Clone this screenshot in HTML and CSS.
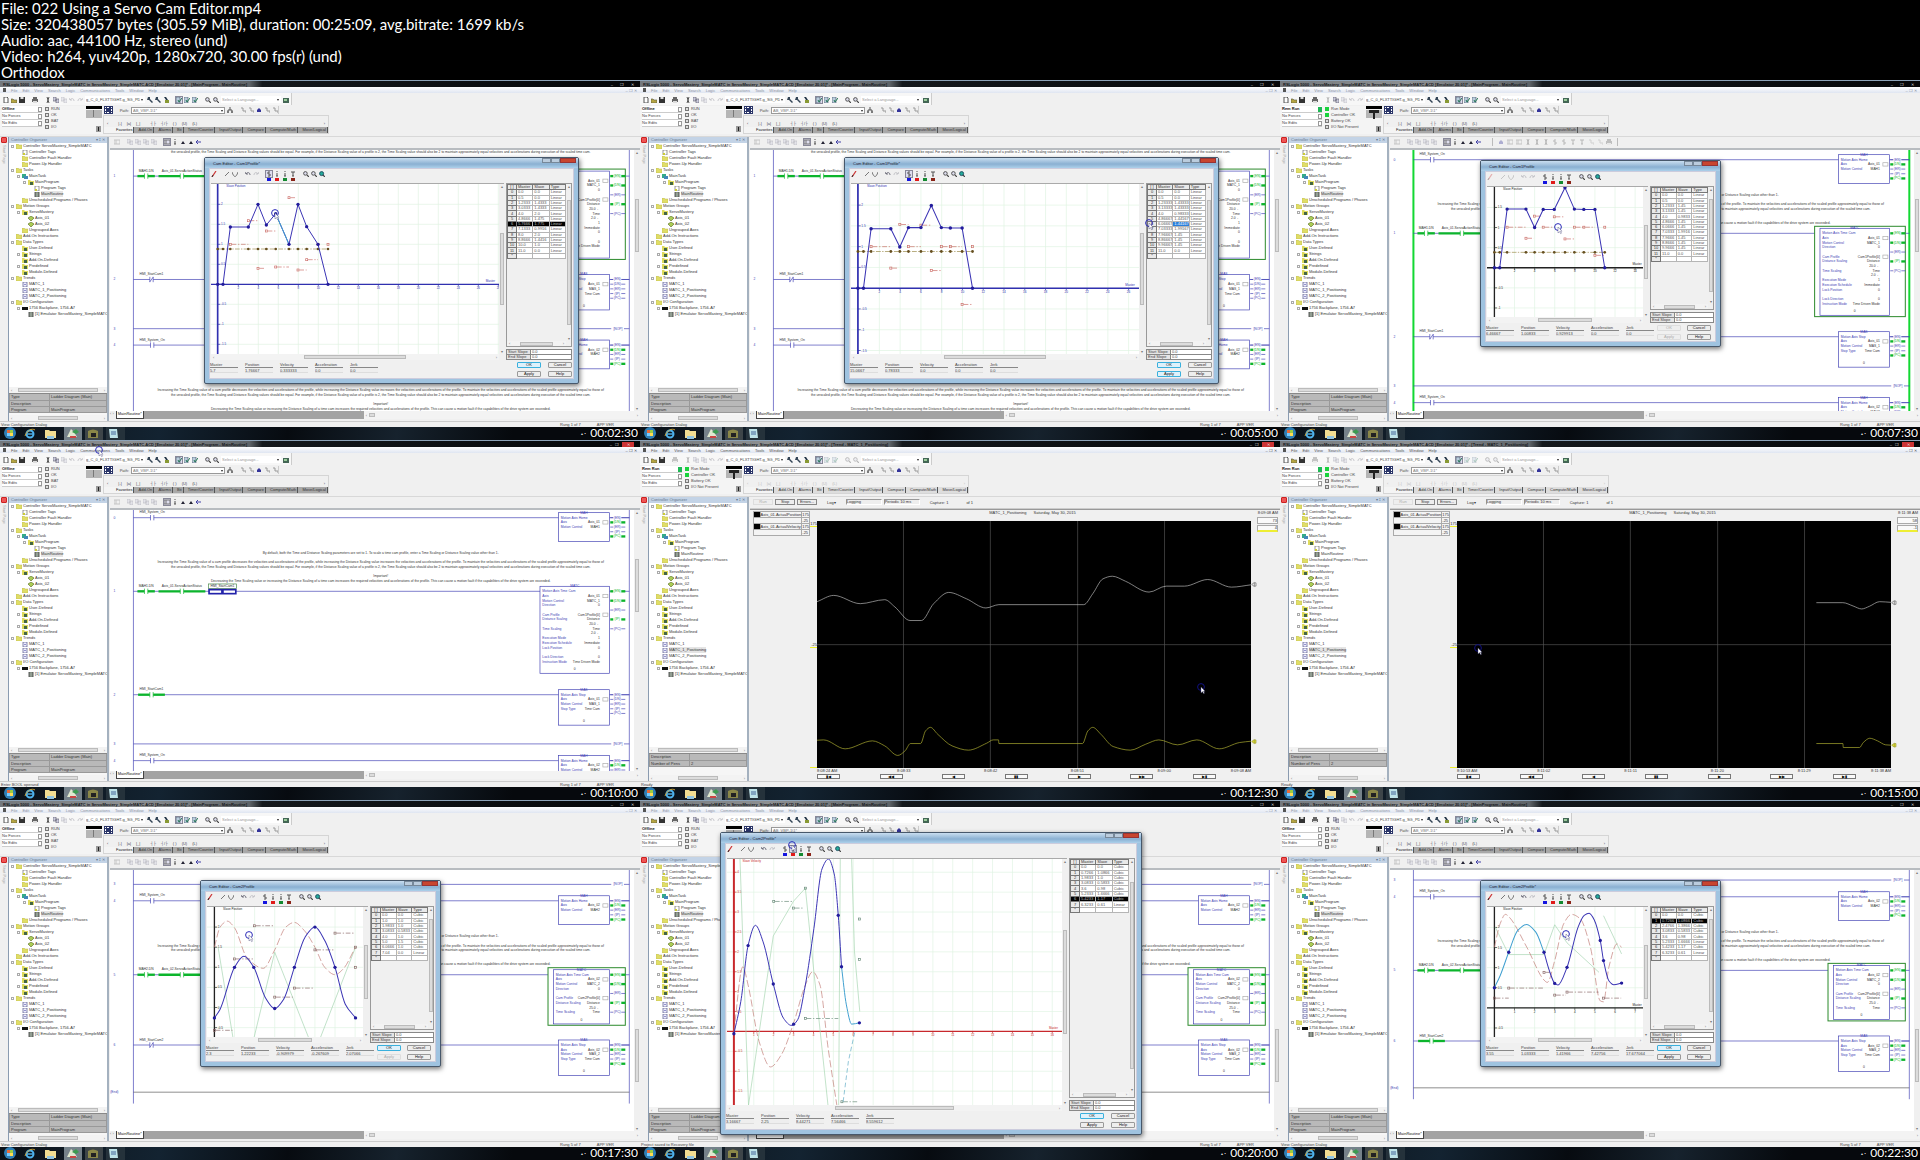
FILE: index.html
```html
<!DOCTYPE html>
<html lang="en">
<head>
<meta charset="utf-8">
<title>022 Using a Servo Cam Editor.mp4</title>
<link rel="stylesheet" href="styles.css">
</head>
<body>
<header class="info">
  <p>File: 022 Using a Servo Cam Editor.mp4</p>
  <p>Size: 320438057 bytes (305.59 MiB), duration: 00:25:09, avg.bitrate: 1699 kb/s</p>
  <p>Audio: aac, 44100 Hz, stereo (und)</p>
  <p>Video: h264, yuv420p, 1280x720, 30.00 fps(r) (und)</p>
  <p>Orthodox</p>
</header>
<main class="sheet" id="sheet"></main>
<script src="script.js"></script>
</body>
</html>
```
FILE: styles.css
```css
* { box-sizing: border-box; }
body { margin: 0; background: #000; font-family: "Liberation Sans", Arial, sans-serif; }
p, h2, ul, dl, dd { margin: 0; padding: 0; }
button, select, input { font: inherit; color: inherit; margin: 0; padding: 0; border-radius: 0; appearance: none; min-width: 0; }
svg { display: block; }

.info { color: #fff; font-family: Lato, "Open Sans", sans-serif; font-size: 15px; line-height: 16px; padding-left: 1px; }
.sheet { display: grid; grid-template-columns: repeat(3, 1fr); }

.frame { position: relative; aspect-ratio: 16 / 9; display: flex; flex-direction: column; overflow: hidden; background: #f0f0f0; color: #444; font-size: 4px; line-height: 5px; white-space: nowrap; }

.title { flex: none; height: 7px; display: flex; align-items: center; justify-content: space-between; padding: 0 6px 0 3px; border-top: 1px solid #8da3b8; color: #15181b; background: linear-gradient(90deg, #74797e, #8d9092 20%, #5f6468 39%, #15191d 41%, #050709); }
.title h2 { font-size: 4px; line-height: 5px; font-weight: bold; }
.title nav { display: flex; gap: 7px; color: #ddd; }
.lit .title nav { gap: 3px; }
.lit .close { background: #c33; width: 12px; text-align: center; }
.menu { flex: none; height: 6px; display: flex; align-items: center; gap: 5px; padding: 0 3px; color: #8b93a3; background: linear-gradient(#fff, #dfe5f1); }
.lit .menu { color: #555; }
.menu i { width: 3px; height: 4px; background: #555; }
.menu .mdi { margin-left: auto; }

.bars { flex: none; height: 44px; display: grid; grid-template-columns: 103px 1fr; grid-template-rows: 12px 8px 19px; align-content: start; justify-items: start; row-gap: 1px; border-bottom: 1px solid #d8d8d8; }
.standard { grid-column: 1 / 3; display: flex; align-items: center; gap: 2px; padding: 1px 3px 0 3px; width: 292px; border-right: 1px solid #ccc; background: #f7f7f7; }
.ic { width: 6px; height: 6px; flex: none; }
.off { opacity: .35; }
.sp { width: 3px; flex: none; }
.combo { height: 7px; border: 0; background: #fff; padding: 0 5px 0 1px; line-height: 6px; }
.pick { position: relative; display: flex; }
.pick::after { content: ""; position: absolute; right: 2px; top: 3px; border: 1px solid transparent; border-top: 2px solid #222; }
.w58 { width: 60px; } .w62 { width: 60px; color: #999; } .w94 { width: 94px; border: 1px solid #999; color: #777; line-height: 5px; }
.state { grid-row: 2 / 4; width: 103px; display: flex; align-items: flex-start; background: #f4f4f4; }
.state dl { width: 42px; padding-left: 2px; }
.state dd { height: 7px; line-height: 6px; border-bottom: 1px solid #ccc; background: #fff; display: flex; justify-content: space-between; align-items: center; }
.state dd:first-child { font-weight: bold; color: #111; }
.state dd i { width: 4px; height: 5px; border: 1px solid #999; }
.run dd:first-child i { background: #1db954; border-color: #1db954; }
.leds { width: 44px; padding-left: 3px; list-style: none; }
.leds li { height: 6px; line-height: 6px; display: flex; gap: 2px; align-items: center; }
.leds i { width: 4px; height: 4px; border: 1px solid #777; background: #ddd; }
.run .leds li:nth-child(-n+2) i { background: #19d23c; border-color: #19d23c; }
.key { width: 16px; height: 28px; }
.path { display: flex; align-items: center; gap: 2px; width: 176px; padding-left: 1px; border-right: 1px solid #ccc; }
.path b { width: 9px; height: 8px; background: #2a3568; border: 2px dotted #fff; outline: 1px solid #2a3568; outline-offset: -1px; }
.instr { width: 226px; border: 1px solid #d5d5d5; display: flex; flex-direction: column; justify-content: space-between; }
.instr div { display: flex; }
.glyphs { gap: 5px; padding: 5px 3px 0; color: #445; }
.glyphs span:last-child { margin-left: auto; }
.idle .glyphs { color: #bbb; }
.tabs { background: #a8a8a8; color: #333; line-height: 6px; height: 6px; justify-content: space-between; }
.tabs span { border-right: 1px solid #555; padding: 0 1px; }
.tabs .on { background: #f4f4f4; color: #111; padding-left: 12px; }
.idle .tabs { background: #ddd; }

.work { flex: 1; min-height: 0; display: grid; grid-template-columns: 8px 101px 1fr; }
.start { writing-mode: vertical-rl; color: #aaa; font-size: 4px; display: flex; gap: 2px; align-items: center; }
.start i { width: 6px; height: 6px; border: 1px solid #c22; background: #e55; border-radius: 1px; }
.side { display: flex; flex-direction: column; min-height: 0; min-width: 0; border-left: 1px solid #8a9bb0; border-right: 2px solid #a4b1bf; }
.side h2 { flex: none; height: 6px; font-size: 4px; line-height: 6px; font-weight: normal; color: #66788c; padding: 0 2px; background: #c3d3e6; display: flex; justify-content: space-between; }
.tree { flex: 1; min-height: 0; list-style: none; background: #fff; overflow: hidden; color: #333; }
.tree li { height: 6px; line-height: 6px; display: flex; align-items: center; gap: 1px; }
.tree .x { width: 3px; height: 3px; border: 1px solid #aaa; flex: none; margin: 0 1px; }
.tree .n { border-color: transparent; }
.tree svg { width: 6px; height: 5px; flex: none; }
.l0 { padding-left: 1px; } .l1 { padding-left: 7px; } .l2 { padding-left: 13px; } .l3 { padding-left: 19px; }
.tree .cur { background: #e4e4e4; }
.hs { flex: none; height: 6px; display: flex; align-items: center; background: #f3f3f3; color: #777; justify-content: space-between; padding: 0 2px; }
.hs i { height: 4px; border: 1px solid #bbb; background: #dcdcdc; }
.props { flex: none; height: 28px; display: flex; flex-direction: column; background: #f6f6f6; border-top: 1px solid #888; }
.props table { border-collapse: collapse; width: 100%; background: #b9b9b9; line-height: 5px; color: #333; table-layout: fixed; }
.props td { padding: 0 1px; border: 1px solid #999; border-top: 0; height: 6px; }
.props td:first-child { width: 40px; }
.props .hs { margin-top: auto; }

.doc { min-width: 0; min-height: 0; display: flex; flex-direction: column; padding-left: 1px; }
.dtools { flex: none; height: 13px; display: flex; align-items: center; gap: 2px; padding: 0 4px 2px; border-bottom: 2px solid #b8bcc0; }
.dtools .pressed, .pressed { outline: 1px solid #889; background: #dde; }
.edits { display: flex; gap: 3px; border-left: 1px solid #bbb; border-right: 1px solid #bbb; margin-left: 8px; padding: 1px 5px; }
.canvas { flex: 1; min-height: 0; display: grid; grid-template-columns: 1fr 6px; background: #fff; }
.canvas svg { width: 100%; height: 100%; min-height: 0; }
.vs { background: #f0f0f0; display: flex; flex-direction: column; justify-content: space-between; align-items: center; line-height: 5px; color: #777; }
.vs i { width: 4px; background: #dcdcdc; border: 1px solid #bbb; }
.sheets { flex: none; height: 10px; display: flex; align-items: flex-start; background: #f0f0f0; color: #777; }
.sheets .tab { background: #fff; border: 1px solid #444; border-top: 0; height: 8px; padding: 0 1px; color: #111; margin-left: 2px; }
.sheets .rest { background: #a3a3a3; height: 8px; width: 220px; }
.sheets .hs { flex: 1; height: 8px; justify-content: flex-start; gap: 2px; }
.sheets .hs span:last-child { margin-left: auto; }
.status { flex: none; height: 6px; line-height: 5px; display: flex; gap: 16px; padding: 0 26px 0 1px; background: #f0f0f0; border-top: 1px solid #ccc; }
.status span:first-child { margin-right: auto; }
.task { flex: none; height: 13px; display: flex; align-items: center; gap: 0; padding-left: 1px; background: linear-gradient(100deg, #0b1117, #132331 25%, #070b10 45%, #16222d 62%, #06090d 80%); }
.task svg { width: 21px; height: 13px; }
.task .tray { margin-left: auto; margin-right: 54px; color: #ddd; }
.stamp { position: absolute; right: 2px; bottom: 0; color: #fff; font-family: Lato, sans-serif; font-size: 12px; line-height: 15px; text-shadow: 1px 1px 0 #000, -1px -1px 0 #000, 1px -1px 0 #000, -1px 1px 0 #000; }
.mouse { position: absolute; width: 11px; height: 12px; }

/* trend view */
.ttools { flex: none; height: 12px; display: flex; align-items: center; gap: 2px; padding: 0 3px 1px; border-bottom: 1px solid #ccc; color: #333; }
.ttools button { width: 20px; height: 6px; line-height: 4px; border: 1px solid #888; background: #eee; }
.ttools button:disabled { border-color: #ddd; color: #aaa; }
.ttools .box { border: 1px solid #999; border-right-color: #fff; border-bottom-color: #fff; width: 36px; height: 6px; line-height: 4px; background: #eee; }
.ttools .gap { margin: 0 8px; }
.trend { flex: 1; min-height: 0; display: grid; grid-template-columns: 60px 7px 1fr 29px; grid-template-rows: 11px 1fr 6px 7px; border-top: 1px solid #999; color: #333; }
.legend { grid-row: 1 / 3; margin: 1px 0 0 3px; align-self: start; border-collapse: collapse; background: #f4f4f4; width: 57px; }
.legend td { border: 1px solid #aaa; padding: 0; height: 6px; line-height: 5px; }
.legend .pen { background: #000; width: 10px; }
.head { grid-column: 3; text-align: center; line-height: 6px; padding-right: 3px; }
.head span { margin-left: 6px; }
.now { grid-column: 4; line-height: 6px; text-align: right; padding-right: 2px; }
.ylab { grid-column: 2; grid-row: 2; display: flex; flex-direction: column; text-align: right; justify-content: space-between; }
.ylab b { font-weight: normal; border-bottom: 1px solid #ee3; }
.ylab b:first-child, .ylab b:last-child { flex: 0 0 5px; }
.plot { grid-column: 3; grid-row: 2; background: #000; min-height: 0; width: 100%; height: 100%; }
.vals { grid-column: 4; grid-row: 2; padding: 0 2px 0 6px; text-align: right; position: relative; }
.vals p { border: 1px solid #aaa; height: 7px; background: #fafafa; margin-top: -4px; margin-bottom: 5px; }
.vals p + p { border-bottom: 2px solid #ee3; line-height: 4px; }
.vals svg { position: absolute; left: 0; top: 0; width: 6px; height: 100%; }
.times { grid-column: 3; grid-row: 3; display: grid; grid-template-columns: 1fr 2fr 2fr 2fr 2fr 1fr; text-align: center; line-height: 6px; }
.times span:first-child { text-align: left; } .times span:last-child { text-align: right; }
.nav { grid-column: 3; grid-row: 4; display: flex; justify-content: space-between; padding-right: 35px; }
.nav button { width: 23px; height: 5px; line-height: 3px; border: 1px solid #777; background: #fafafa; color: #000; }

/* cam editor window */
.dlg { position: absolute; display: flex; flex-direction: column; padding: 0 4px 4px; border: 1px solid #47586b; border-radius: 2px; background: #9fc3e0; box-shadow: 1px 2px 5px #0008; color: #444; }
.big { left: 204px; top: 77px; width: 375px; height: 227px; }
.small { left: 200px; top: 80px; width: 241px; height: 187px; }
.tall { left: 80px; top: 32px; width: 422px; height: 303px; }
.cap { flex: none; height: 10px; margin: 0 -4px; padding: 0 2px 0 8px; display: flex; justify-content: space-between; align-items: center; color: #223; background: linear-gradient(#c9def0, #8ab0d2 60%, #acd0ea); }
.cap div { display: flex; align-self: flex-start; }
.cap b { width: 9px; height: 5px; background: #bcd; border: 1px solid #789; }
.cap b:last-child { width: 16px; background: #c8452f; border-color: #933; }
.pane { flex: 1; min-height: 0; display: flex; flex-direction: column; background: #f0f0f0; padding: 1px 1px 0; border: 1px solid #ccd; }
.ctools { flex: none; height: 13px; display: flex; align-items: flex-start; gap: 2px; }
.ctools .ic { margin-top: 1px; }
.kind { display: flex; flex-direction: column; gap: 1px; width: 6px; }
.kind i { height: 3px; width: 4px; align-self: center; }
.mid { flex: 1; min-height: 0; display: grid; grid-template-columns: 1fr 66px; column-gap: 2px; }
.small .mid { grid-template-columns: 1fr 64px; }
.graph { min-height: 0; min-width: 0; display: grid; grid-template-columns: 1fr 5px; grid-template-rows: 1fr 6px; border-top: 1px solid #aaa; }
.graph svg { width: 100%; height: 100%; min-height: 0; background: #fff; }
.gridside { display: flex; flex-direction: column; gap: 2px; min-height: 0; }
.cells { flex: 1; min-height: 0; display: grid; grid-template-columns: 1fr 5px; grid-template-rows: 1fr 5px; border: 1px solid #999; align-items: start; }
.cells > .vs { align-self: stretch; }
.cells > .hs { height: 5px; }
.pts { border-collapse: collapse; width: 100%; table-layout: fixed; background: #fff; line-height: 4px; color: #555; }
.pts th, .pts td { border: 1px solid #b5b5b5; padding: 0 1px; font-weight: normal; text-align: left; overflow: hidden; height: 5px; }
.pts th { background: #e9e9e9; border-color: #777; color: #333; }
.pts th:first-child { width: 9px; padding: 0; text-align: center; }
.big .pts { height: 75px; } .small .pts, .tall .pts { height: 54px; } .small .p12 { height: 75px; }
.pts .sel > * { background: #000; color: #bbb; }
.pts .hit { background: #2a7fdc; color: #fff; }
.slopes { border-collapse: collapse; width: 100%; background: #fff; }
.slopes td, .slopes th { border: 1px solid #888; height: 5px; padding: 0 1px; line-height: 4px; text-align: left; font-weight: normal; }
.slopes th { background: #e5e5e5; width: 24px; }
.foot { flex: none; height: 18px; display: flex; gap: 7px; margin-left: -1px; padding-top: 2px; }
.foot label { display: flex; flex-direction: column; width: 28px; line-height: 5px; }
.foot input { border: 0; border-top: 1px solid #888; border-bottom: 1px solid #ddd; background: #eee; height: 6px; width: 28px; line-height: 4px; }
.btns { margin-left: auto; display: grid; grid-template-columns: 24px 24px; column-gap: 7px; row-gap: 3px; align-content: start; }
.small .btns { column-gap: 6px; margin-left: -4px; }
.btns button { height: 6px; line-height: 4px; border: 1px solid #999; background: #eee; border-radius: 1px; color: #111; }
.btns .go { border-color: #3ab0dd; background: #dff1fb; }
.btns button:disabled { border-color: #ddd; color: #aaa; }
```
FILE: script.js
```js
const K = 1920 / 1568; // half-res capture columns to ladder units
const many = (n, f) => Array.from({ length: n }, (_, i) => f(i)).join('');

/* ---------- icons ---------- */
const shapes = {
  doc: '<path d="M1 0h3l1 1v5H1z" fill="#fff" stroke="#555"/>',
  open: '<path d="M0 2h2l1 1h3v3H0z" fill="#b5a642" stroke="#554" stroke-width=".6"/>',
  save: '<path d="M0 0h6v6H0z" fill="#333"/><path d="M1.5 0h3v2h-3z" fill="#ddd"/>',
  print: '<path d="M1 0h4v2h1v3H0V2h1z" fill="#666"/><path d="M1 4h4v2H1z" fill="#ddd"/>',
  cut: '<path d="M2 0l2 6M4 0L2 6" stroke="#555"/>',
  copy: '<path d="M0 0h3v4H0zM3 2h3v4H3z" fill="#ccd" stroke="#556" stroke-width=".6"/>',
  undo: '<path d="M1 3c1-2 4-2 4 1M0 1l1 2h2" fill="none" stroke="#556" stroke-width=".8"/>',
  redo: '<path d="M5 3c-1-2-4-2-4 1M6 1L5 3H3" fill="none" stroke="#556" stroke-width=".8"/>',
  find: '<path d="M1 0h2v2l3 3-1 1-3-3H0z" fill="#345"/>',
  ffwd: '<path d="M1 0h2l2 3H3z" fill="#234"/><path d="M2 3h4v3H2z" fill="#893"/>',
  zoom: '<circle cx="2.4" cy="2.4" r="1.8" fill="#dde" stroke="#555"/><path d="M4 4l2 2" stroke="#444" stroke-width="1.2"/>',
  fit: '<circle cx="2.6" cy="2.6" r="2" fill="#2a9" stroke="#256"/><path d="M4 4l2 2" stroke="#444" stroke-width="1.2"/>',
  check: '<path d="M0 0h4v6H0z" fill="#bcd" stroke="#456" stroke-width=".6"/><path d="M2 3l1 2 3-4" fill="none" stroke="#275" />',
  net: '<path d="M3 0v3M1 6V3h4v3M0 5h2M4 5h2" fill="none" stroke="#555"/>',
  probe: '<path d="M1 1h2v3h3v2" fill="none" stroke="#999"/>',
  step: '<path d="M3 1l2 2v2H1V3z" fill="#339"/>',
  up: '<path d="M3 2l2 3H1z" fill="#223"/>',
  arrow: '<path d="M0 3h5M2 1L0 3l2 2" fill="none" stroke="#44a"/>',
  globe: '<path d="M0 1h6v5H0z" fill="#465"/><path d="M1 2h3v2H1z" fill="#9c9"/>',
  pen: '<path d="M1 6L5 0" stroke="#c33" stroke-width="1.2"/><path d="M1 6l1-2" stroke="#333"/>',
  line: '<path d="M1 5l4-4" stroke="#777"/>',
  curve: '<path d="M0 1c2 6 4 6 6 0" fill="none" stroke="#777"/>',
  T: '<path d="M1 1h4M3 1v4M2 5h2" fill="none" stroke="#555"/>',
  s: '<path d="M4 1H2v2h2v2H2" fill="none" stroke="#555"/>',
  i: '<path d="M3 0v1M3 2v3M2 5h2" stroke="#555"/>',
  blk: '<path d="M0 1h6v4H0z" fill="none" stroke="#777"/><path d="M2 1v4" stroke="#777"/>'
};
const ic = (n, c = '') => `<svg class="ic ${c}" viewBox="0 0 6 6" aria-hidden="true">${shapes[n]}</svg>`;
const folder = '<svg viewBox="0 0 6 5"><path d="M0 0h2l1 1h3v4H0z" fill="#e0dd66" stroke="#b9b555" stroke-width=".5"/></svg>';
const treeIcons = {
  f: folder,
  g: '<svg viewBox="0 0 6 5"><path d="M0 0h2l1 1h3v4H0z" fill="#dedb5c"/><path d="M2 2h3v3H2z" fill="#464"/></svg>',
  t: '<svg viewBox="0 0 6 5"><path d="M1 0h4v5H1z" fill="#fff" stroke="#555" stroke-width=".6"/><path d="M1 3h2v2H1z" fill="#cc3"/></svg>',
  r: '<svg viewBox="0 0 6 5"><path d="M1 0h4v5H1z" fill="#bcb" stroke="#333" stroke-width=".8"/><path d="M2 1v3M4 1v3" stroke="#333" stroke-width=".6"/></svg>',
  k: '<svg viewBox="0 0 6 5"><path d="M0 0h4v4H0z" fill="#3a8"/><path d="M2 2h4v3H2z" fill="#48b"/></svg>',
  a: '<svg viewBox="0 0 6 5"><path d="M0 2l3-2 3 2-3 3z" fill="#ac5" stroke="#562" stroke-width=".6"/></svg>',
  n: '<svg viewBox="0 0 6 5"><path d="M1 0h4v5H1z" fill="#eef" stroke="#558" stroke-width=".7"/><path d="M2 3l1-1 1 1" stroke="#55a" stroke-width=".6" fill="none"/></svg>',
  b: '<svg viewBox="0 0 6 5"><path d="M0 1h6v3H0z" fill="#111"/></svg>'
};

/* ---------- controller organizer ---------- */
const tree = [[0, 1, 'f', 'Controller ServoMastery_SimpleMATC'], [1, 0, 't', 'Controller Tags'], [1, 0, 'f', 'Controller Fault Handler'], [1, 0, 'f', 'Power-Up Handler'],
  [0, 1, 'f', 'Tasks'], [1, 1, 'k', 'MainTask'], [2, 1, 'g', 'MainProgram'], [3, 0, 't', 'Program Tags'], [3, 0, 'r', 'MainRoutine'], [1, 0, 'f', 'Unscheduled Programs / Phases'],
  [0, 1, 'f', 'Motion Groups'], [1, 1, 'g', 'ServoMastery'], [2, 0, 'a', 'Axis_01'], [2, 0, 'a', 'Axis_02'], [1, 0, 'f', 'Ungrouped Axes'], [0, 0, 'f', 'Add-On Instructions'],
  [0, 1, 'f', 'Data Types'], [1, 0, 'g', 'User-Defined'], [1, 1, 'g', 'Strings'], [1, 0, 'g', 'Add-On-Defined'], [1, 1, 'g', 'Predefined'], [1, 0, 'g', 'Module-Defined'],
  [0, 1, 'f', 'Trends'], [1, 0, 'n', 'MATC_1'], [1, 0, 'n', 'MATC_1_Positioning'], [1, 0, 'n', 'MATC_2_Positioning'],
  [0, 1, 'f', 'I/O Configuration'], [1, 1, 'b', '1756 Backplane, 1756-A7'], [2, 0, 'r', '[1] Emulator ServoMastery_SimpleMATC']];
const hs = w => `<div class="hs"><span>‹</span><i style="width:${w}%"></i><span>›</span></div>`;
const side = f => `<aside class="side"><h2><span>Controller Organizer</span><span>▾ ‡ ✕</span></h2><ul class="tree">${
  tree.map(([l, x, i, t]) => `<li class="l${l}"><span class="x ${x ? '' : 'n'}"></span>${treeIcons[i]}<span class="${t === (f.trend ? 'MATC_1_Positioning' : 'MainRoutine') ? 'cur' : ''}">${t}</span></li>`).join('')
}</ul>${hs(86)}<div class="props"><table>${
  (f.trend ? [['Description', ''], ['Number of Pens', '2']] : [['Type', 'Ladder Diagram (Main)'], ['Description', ''], ['Program', 'MainProgram']]).map(r => `<tr><td>${r[0]}</td><td>${r[1]}</td></tr>`).join('')
}</table>${hs(42)}</div></aside>`;

/* ---------- ladder ---------- */
const C1 = ['By default, both the Time and Distance Scaling parameters are set to 1. To scale a time cam profile, enter a Time Scaling or Distance Scaling value other than 1.',
  'Increasing the Time Scaling value of a cam profile decreases the velocities and accelerations of the profile, while increasing the Distance Scaling value increases the velocities and accelerations of the profile. To maintain the velocities and accelerations of the scaled profile approximately equal to those of',
  'the unscaled profile, the Time Scaling and Distance Scaling values should be equal. For example, if the Distance Scaling value of a profile is 2, the Time Scaling value should also be 2 to maintain approximately equal velocities and accelerations during execution of the scaled time cam.',
  'Important!', 'Decreasing the Time Scaling value or increasing the Distance Scaling of a time cam increases the required velocities and accelerations of the profile. This can cause a motion fault if the capabilities of the drive system are exceeded.'];
const B = '#4040b4', G = '#0cb52c';
const tx = (x, y, s, a = 'start', c = '#333') => `<text x="${x}" y="${y + 3}" text-anchor="${a}" fill="${c}">${s}</text>`;
const ln = (x1, y1, x2, y2, c = B, w = 2, e = '') => `<path d="M${x1} ${y1}L${x2} ${y2}" stroke="${c}" stroke-width="${w}" ${e}/>`;
const box = (x, y, w, h, c = B, w2 = 2) => `<rect x="${x}" y="${y}" width="${w}" height="${h}" fill="#fff" stroke="${c}" stroke-width="${w2}"/>`;
const comments = y => [-115, -87, -73, -45, -31].map((d, i) => tx(1139, y + d, C1[i], 'middle')).join('');
const coil = (y, n, on, rail) => (on ? ln(1825, y, 1870, y, G, 7) : ln(1825, y, rail ? 1882 : 1870, y)) + `<rect x="1834" y="${y - 5}" width="24" height="10" fill="#fff"/>` + tx(1846, y, `(${n})`, 'middle', on ? G : B);
function block(y, name, x, h, lines, coils, on, sel) {
  let s = sel ? box(x - 16, y - 21, 1870 - x + 16, h + 10, '#2c8a2c', 3) : '';
  s += box(x, y - 15, 1823 - x, h) + tx((x + 1823) / 2, y - 15, name, 'middle', B);
  lines.forEach(([d, l, r, k]) => { s += tx(x + 7, y + d, l, 'start', B) + tx(1794, y + d, r || '', 'end') + (k ? box(1803, y + d - 5, 15, 10, '#aaa') : ''); });
  return s + tx((x + 1823) / 2, y + h - 28, name === 'MAH' ? '' : '0', 'middle') +
    ['EN', 'DN', 'ER', 'IP', 'PC'].map((n, i) => coil(y + i * coils, n, on.includes(n), !i)).join('');
}
const contact = (x, y, n, on, w = 26, nc) => (on ? ln(x - w, y, x + w, y, G, 7) : '') + `<rect x="${x - 5}" y="${y - 6}" width="10" height="12" fill="#fff"/>` +
  ln(x - 5, y - 8, x - 5, y + 8, on ? G : B) + ln(x + 5, y - 8, x + 5, y + 8, on ? G : B) + (nc ? ln(x - 5, y + 7, x + 5, y - 7) : '') + tx(x, y - 16, n, 'middle');
function rung(kind, y, n, f) {
  let s = tx(343, y, n, 'middle', B) + (kind === 'end' ? ln(400, y, 1882, y, '#555') : ln(400, y, kind === 'nop' ? 1832 : 1882, y));
  const a = n < 4 ? 1 : 2;
  if (kind === 'home') s += contact(456, y, 'HMI_System_On') + block(y, 'MAH', 1670, 86, [[0, 'Motion Axis Home'], [14, 'Axis', 'Axis_0' + a, 1], [28, 'Motion Control', 'MAH' + a]], 14, ['DN', 'PC']);
  if (kind === 'nop') s += `<rect x="1828" y="${y - 5}" width="38" height="10" fill="#fff"/>` + tx(1848, y, '[NOP]', 'middle', B) + ln(1866, y, 1882, y);
  if (kind === 'stop') s += contact(454, y, 'HMI_StartCam' + a, f.stopOn, 40, !f.stopOn) + block(y, 'MAS', 1670, 106, [[0, 'Motion Axis Stop'], [14, 'Axis', 'Axis_0' + a, 1], [28, 'Motion Control', 'MAS_' + a], [42, 'Stop Type', 'Time Cam']], 14, a === 2 || f.run ? ['DN', 'PC'] : []);
  if (kind === 'cam') {
    s += comments(y) + contact(438, y, `MAH${a}.DN`, 1) + contact(545, y, `Axis_0${a}.ServoActionStatus`, 1, 70);
    if (f.pick) s += `<rect x="624" y="${y - 22}" width="84" height="14" fill="#fff" stroke="#484" stroke-width="2"/>` + tx(666, y - 15, 'HMI_StartCam1', 'middle') + `<rect x="626" y="${y - 5}" width="80" height="12" fill="#fff" stroke="#22a" stroke-width="5"/>` + ln(666, y - 6, 666, y + 7, '#22a', 8);
    const L = [[0, 'Motion Axis Time Cam'], [14, 'Axis', 'Axis_0' + a, 1], [28, 'Motion Control', 'MATC_' + a], [42, 'Direction', '0'], [70, 'Cam Profile', `Cam${a}Profile[0]`, 1], [84, 'Distance Scaling', 'Distance'], [98, '', (a < 2 ? '20.0' : '25.0') + ' ←'], [112, 'Time Scaling', 'Time']];
    s += a === 1 ? block(y, 'MATC', 1615, 260, [...L, [126, '', '2.0 ←'], [140, 'Execution Mode', '1'], [154, 'Execution Schedule', 'Immediate'], [168, 'Lock Position', '0'], [196, 'Lock Direction', '0'], [210, 'Instruction Mode', 'Time Driven Mode']], 28, ['EN', 'DN', 'IP'], !f.pick)
      : block(y, 'MATC', 1655, 162, L, 28, ['EN', 'DN', 'IP'], 1);
  }
  return s;
}
function ladder(f) {
  const c = f.run ? '#12d832' : B, w = f.run ? 6 : 2, e = f.railEnd || 1000;
  return `<svg viewBox="330 210 1572 780" preserveAspectRatio="xMinYMin slice" font-size="10">${ln(400, 200, 400, e, c, w)}${ln(1882, 200, 1882, e, c, w)}${
    f.rungs.map(r => rung(...r, f)).join('')}${f.tail ? C1.slice(1).map((t, i) => tx(1139, [927, 941, 969, 983][i], t, 'middle')).join('') : ''}</svg>`;
}
const ladderDoc = f => `<section class="doc"><div class="dtools">${ic('blk', 'off')}<span class="sp"></span>${many(4, () => ic('copy', 'off'))}<span class="sp"></span>${ic('blk', 'pressed')}${ic('i')}${ic('up')}${ic('up')}${ic('arrow')}${
  f.run ? `<div class="edits">${['step', 'blk', 'blk', 'cut', 'cut', 'cut', 's', 's', 'T', 'T', 'probe', 'probe', 'print'].map(n => ic(n, 'off')).join('')}</div>` : ''}</div>
<div class="canvas">${ladder(f)}<div class="vs"><span>▴</span><i style="height:20%;margin-${f.low ? 'top' : 'bottom'}:110px"></i><span>▾</span></div></div>
<div class="sheets"><span>‹ ›</span><span class="tab">MainRoutine*</span><div class="rest"></div><div class="hs"><span>‹</span><i style="width:2%"></i><span>›</span></div></div></section>`;

/* ---------- curves ---------- */
function smooth(p) { // monotone cubic through the points
  const d = [], m = [], n = p.length;
  for (let i = 0; i < n - 1; i++) d.push((p[i + 1][1] - p[i][1]) / (p[i + 1][0] - p[i][0]));
  for (let i = 0; i < n; i++) m.push(i === 0 ? d[0] : i === n - 1 ? d[n - 2] : d[i - 1] * d[i] <= 0 ? 0 : 2 * d[i - 1] * d[i] / (d[i - 1] + d[i]));
  let s = `M${p[0]}`;
  for (let i = 0; i < n - 1; i++) { const h = (p[i + 1][0] - p[i][0]) / 3; s += `C${p[i][0] + h} ${p[i][1] + m[i] * h} ${p[i + 1][0] - h} ${p[i + 1][1] - m[i + 1] * h} ${p[i + 1]}`; }
  return s;
}
const pairs = s => s.trim().split(/\s+/).map(q => q.split(',').map(Number));
function chart(c) {
  const k = c.k, X = x => +(x * k).toFixed(1), P = s => pairs(s).map(([x, y]) => [X(x), y]);
  const [ox, oy, w, h] = c.area, R = ox + w, Bt = oy + h, st = c.k === 1 ? 60 : 49;
  let s = '';
  for (let x = c.ax + st + (k === 1 ? 2 : 0), i = 1; x < R; x += st, i++) s += ln(X(x), oy, X(x), Bt, '#dff3e2', 2) + (c.ay ? ln(X(x), c.ay, X(x), c.ay + 6, c.col) + tx(X(x), c.ay + 11, i * (c.mul || 1), 'middle', c.col) : '');
  for (let y = c.gy, i = 0; y < Bt; y += 60, i++) s += ln(X(ox), y, X(R), y, '#dff3e2', 2) + (Math.abs(y - c.ay) < 2 ? '' : ln(X(c.ax), y, X(c.ax) + 8, y, c.col) + tx(X(c.ax) + 10, y, c.top - i * .5, 'start', c.col));
  s += ln(X(c.ax), oy, X(c.ax), Bt, c.col, c.thick || 4) + (c.ay ? ln(X(ox), c.ay, X(R), c.ay, c.col, 4) + tx(X(R) - 12, c.ay - 10, 'Master', 'end', c.col) : '') + tx(X(c.ax) + 26, oy + 7, c.vel ? 'Slave Velocity' : 'Slave Position', 'start', c.col);
  const path = (q, col, sw, da, sm = 1) => `<path d="${sm ? smooth(P(q)) : 'M' + P(q).join('L')}" fill="none" stroke="${col}" stroke-width="${sw}" ${da ? `stroke-dasharray="${da}"` : ''}/>`;
  if (c.olive) { const xs = c.olive.x; s += ln(X(xs[0]), c.olive.y, X(xs.at(-1)), c.olive.y, '#9a8a48', 2, 'stroke-dasharray="14 4 4 4"') + xs.map(x => `<circle cx="${X(x)}" cy="${c.olive.y}" r="4" fill="#664f20"/>`).join(''); }
  (c.green || []).forEach(g => { s += path(g, '#a4d4af', 2, '', 0); });
  if (c.red) s += path(c.red, '#c07a74', 2, '22 8');
  pairs(c.marks).forEach(([x, y, e]) => { s += `<rect x="${X(x) - 3}" y="${y - 3}" width="6" height="6" fill="none" stroke="${c.mc || '#cc6f6a'}" stroke-width="2"/>` + (e ? ln(X(x) + 4, y, X(e), y, c.mc || '#cc6f6a', 2, 'stroke-dasharray="14 5 4 5"') : ''); });
  if (c.ghost) s += path(c.ghost, '#5aa9c4', 2, '14 8', 0);
  s += path(c.line, '#3a34b4', 3, '', c.soft || 0) + (c.cyan ? path(c.cyan, '#3f9fd0', 3, '', c.soft || 0) : '');
  (c.dots ? P(c.dots) : P(c.line)).forEach(([x, y]) => { s += `<circle cx="${x}" cy="${y}" r="5" fill="#221c9c"/>`; });
  return `<svg viewBox="${X(ox)} ${oy} ${X(w)} ${h}" preserveAspectRatio="xMinYMin slice" font-size="9">${s}</svg>`;
}
const charts = {
  1: { k: 1, area: [33, 100, 864, 513], ax: 53, ay: 401, gy: 161, top: 2, mul: 2, col: '#3030b0', thick: 5,
    line: '53,401 69,401 91,229 145,229 174,161 199,223 227,189 267,281 294,161 320,228 354,281 384,401', cyan: '227,189 267,281',
    marks: '91,281,145 145,210,174 174,353,195 199,241,227 227,349,267 267,141,290 294,358,320 320,327,354 354,281 384,281', olive: { y: 295, x: [53, 69, 91, 145, 174, 199, 227, 267, 294, 320, 354, 384] } },
  2: { k: 1, area: [33, 100, 832, 513], ax: 53, ay: 401, gy: 161, top: 2, mul: 2, col: '#3030b0', thick: 5,
    line: '53,401 69,401 91,229 148,229 174,282 199,226 235,226 265,162 294,226 320,227 354,227 384,401',
    marks: '91,281,148 148,343,170 174,217,199 199,281,235 235,219,265 265,350,294 294,281,320 320,281,354 354,448,384 384,281', olive: { y: 295, x: [53, 69, 91, 148, 174, 199, 235, 265, 294, 320, 354, 384] } },
  3: { k: K, area: [503, 320, 387, 388], ax: 521, ay: 561, gy: 381, top: 1.5, mul: 2, col: '#222',
    line: '521,561 534,561 552,386 598,386 619,441 640,387 667,387 693,322 716,386 739,387 766,387 790,561',
    marks: '552,440,598 598,473,617 619,407,638 640,440,667 667,409,692 693,475,716 716,440,738 739,440,766 766,524,788 790,440', olive: { y: 515, x: [521, 534, 552, 598, 619, 640, 667, 693, 716, 739, 766, 790] } },
  7: { k: K, area: [503, 320, 387, 388], ax: 521, ay: 0, gy: 380, top: 2, col: '#222', soft: 1, mc: '#866',
    line: '521,651 535,625 570,500 593,467 617,500 645,590 668,623 690,595 716,500 742,410 766,380 790,420 815,500 840,610 865,651', dots: '521,651 570,500 617,500 668,623 716,500 766,380 815,500 865,651',
    red: '521,440 535,380 552,362 570,382 600,470 640,503 668,448 695,380 716,366 740,390 766,440 790,500 815,522 835,505 865,440', green: ['530,440 566,708', '618,708 668,455 750,708', '780,708 865,440'],
    marks: '619,376,665 815,398,862 570,475,617 668,589,712 716,562,765 766,448,812 521,688,565 865,440 865,500' },
  8: { k: K, area: [211, 170, 825, 746], ax: 228, ay: 690, gy: 210, top: 4, col: '#c8282c', thick: 6, soft: 1, vel: 1, mc: '#687',
    line: '228,697 245,600 263,431 281,370 300,420 325,547 350,650 370,672 385,655 404,550 425,380 445,200 461,170 475,215 485,340 493,495', cyan: '493,495 505,610 518,668 537,664', dots: '228,697 263,431 325,547 375,668 485,340 493,495 537,664',
    red: '228,690 250,495 263,550 290,720 318,797 345,760 375,665 404,550 422,510 440,550 460,740 482,916', green: ['243,170 264,912 325,402 375,297 404,258 425,510 460,916', '486,916 490,170', '518,170 525,450 538,630'], ghost: '497,902 510,780 526,690',
    marks: '326,298,372 375,318,400 404,651,485 494,902,535 537,351 537,473 404,258' },
  9: { k: K, area: [503, 320, 387, 388], ax: 521, ay: 621, gy: 381, top: 2, col: '#222', soft: 1, mc: '#866',
    line: '642,455 655,510 668,548 676,553 698,500 725,380 740,345 752,339 765,360 779,420 787,480 800,540 812,552 831,547', cyan: '521,561 535,525 556,455 578,390 600,372 622,395 642,455', dots: '521,561 556,455 642,455 668,548 698,500 779,420 787,480 831,547',
    red: '521,440 535,370 548,342 557,350 600,440 642,538 650,545 668,480 690,370 709,342 730,355 755,440 779,600 787,603 800,500 820,430 831,440', green: ['523,380 556,462 642,462 668,373 698,427 776,515', '787,346 831,460'],
    marks: '521,592,556 556,562,642 642,515,660 668,583,695 698,574,775 787,592,830' }
};

/* ---------- cam editor ---------- */
const points = {
  1: '0.0 0.0|0.5 0.0|1.2333 1.4333|3.0333 1.4333|4.0 2.0|4.8666 1.475|5.7666 1.775|7.1333 0.9916|8.0 2.0|8.8666 1.4416|10.0 1.0|11.0 0.0',
  2: '0.0 0.0|0.5 0.0|1.23333 1.43333|3.13333 1.43333|4.0 0.98333|4.86667 1.44167|6.06667 1.44167|7.03333 1.99167|7.96667 1.45|8.86667 1.45|9.96667 1.45|11.0 0.0',
  3: '0.0 0.0|0.5 0.0|1.2333 1.45|3.1333 1.45|4.0 0.9833|4.8666 1.45|6.0666 1.45|7.0333 1.9916|7.9666 1.45|8.8666 1.45|9.9666 1.45|11.0 0.0',
  7: '0.0 0.0|1.0 1.0|1.9833 1.0|3.0833 0.5833|4.0 1.0|5.0 1.5|6.0666 1.0|7.04 0.0',
  8: '0.0 0.0|0.7266 1.0866|1.9833 1.0|3.0833 0.5833|3.6 0.98|5.2333 1.6666|5.4233 1.17|6.3233 0.61',
  9: '0.0 0.0|0.7266 1.0866|2.4766 1.3866|3.0833 0.5833|3.6 0.98|5.2333 1.6666|5.4233 1.17|6.3233 0.61'
};
function dialog(f) {
  const id = f.dlg, r = points[id].split('|'), vs = '<span>▴</span><i style="height:42%"></i><span>▾</span>';
  const type = i => id < 4 ? 'Linear' : (i === r.length - 1 || (id === 9 && i === 5)) ? 'Linear' : 'Cubic';
  return `<section class="dlg ${f.size}"><div class="cap"><span>Cam Editor - ${f.name}</span><div><b></b><b></b><b></b></div></div><div class="pane">
<div class="ctools">${ic('pen', f.run ? 'off' : '')}<span class="sp"></span>${ic('line', f.run ? 'off' : '')}${ic('curve', f.run ? 'off' : '')}<span class="sp"></span>${ic('undo', f.run ? 'off' : '')}${ic('redo', 'off')}<span class="sp"></span>${
    [['s', '#1414e0'], ['i', '#e01a1a'], ['i', '#128a30'], ['T', '#8a2418']].map(([n, c], i) => `<span class="kind">${ic(n, (id < 3 && !i) || (id === 8 && i === 1) ? 'pressed' : '')}<i style="background:${c}"></i></span>`).join('')}<span class="sp"></span>${ic('zoom')}${ic('zoom')}${ic('fit')}</div>
<div class="mid"><div class="graph">${chart(charts[id])}<div class="vs">${vs}</div>${hs(36)}</div>
<div class="gridside"><div class="cells"><table class="pts p${r.length}"><tr><th>[ ]</th><th>Master</th><th>Slave</th><th>Type</th></tr>${
    r.map((q, i) => { const [m, s] = q.split(' '); return `<tr class="${f.sel === i ? 'sel' : ''}"><th>${i}</th><td>${m}</td><td class="${f.hit === i ? 'hit' : ''}">${s}</td><td>${type(i)}</td></tr>`; }).join('')}<tr><th>*</th><td></td><td></td><td></td></tr></table><div class="vs"><span>▴</span><i style="height:80%"></i><span>▾</span></div>${hs(60)}</div>
<table class="slopes"><tr><th>Start Slope</th><td>0.0</td></tr><tr><th>End Slope</th><td>0.0</td></tr></table></div></div>
<div class="foot">${['Master', 'Position', 'Velocity', 'Acceleration', 'Jerk'].map((n, i) => `<label>${n}<input value="${f.vals[i]}" readonly></label>`).join('')}<div class="btns"><button class="${f.run ? '' : 'go'}" ${f.run ? 'disabled' : ''}>OK</button><button>Cancel</button><button class="${id === 2 ? 'go' : ''}" ${f.noApply ? 'disabled' : ''}>Apply</button><button>Help</button></div></div></div></section>`;
}

/* ---------- trend ---------- */
const tp = (s, c) => `<path d="${smooth(pairs(s).map(([x, y]) => [x * K, y]))}" fill="none" stroke="${c}" stroke-width="2"/>`;
function trendDoc(f) {
  const t = f.trend;
  return `<section class="doc"><div class="ttools"><button disabled>Run</button><button>Stop</button><button>Errors...</button><span class="gap">Log▾</span><span class="box">Logging</span><span class="box">Periodic 10 ms</span><span class="gap">Capture: 1</span><span class="gap">of 1</span></div>
<div class="trend"><table class="legend">${['Position', 'Velocity'].map(n => `<tr><td class="pen"></td><td>Axis_01.Actual${n}</td><td>175</td></tr><tr><td colspan="2"></td><td>-25</td></tr>`).join('')}</table>
<div class="head">MATC_1_Positioning <span>Saturday, May 30, 2015</span></div><div class="now">${t.now}</div>
<div class="ylab"><b>175</b><b>-25</b><b></b></div>
<svg class="plot" viewBox="${434 * K} 240 ${1064 * K} 747" preserveAspectRatio="none">${[646, 859, 1073, 1286].map(x => ln(x * K, 240, x * K, 987, '#555', 2)).join('')}${ln(434 * K, 614, 1498 * K, 614, '#555', 2)}${tp(t.w, '#c0c0c0')}${tp(t.y, '#b4b434')}</svg>
<div class="vals"><p>${t.vals[0]}</p><p>${t.vals[1]}</p><svg viewBox="0 240 18 747" preserveAspectRatio="none"><path d="M2 ${t.m[0]}l8-6v12zM10 ${t.m[0] - 5}h5v10h-5" fill="none" stroke="#666" stroke-width="2"/><path d="M2 ${t.m[1]}l8-6v12zM10 ${t.m[1] - 5}h5v10h-5" fill="#dd3" stroke="#993" stroke-width="2"/></svg></div>
<div class="times">${t.times.map(x => `<span>${x}</span>`).join('')}</div>
<div class="nav">${['▮◀', '◀◀', '◀', '▮▮', '▶', '▶▶', '▶▮'].map(x => `<button>${x}</button>`).join('')}</div></div></section>`;
}

/* ---------- window ---------- */
const bars = f => `<div class="bars"><div class="standard">${ic('doc')}${ic('open')}${ic('save')}<span class="sp"></span>${ic('print', f.trend ? 'off' : '')}<span class="sp"></span>${ic('cut', f.run ? 'off' : '')}${ic('copy', f.trend ? 'off' : '')}${ic('copy', 'off')}${ic('undo', 'off')}${ic('redo', 'off')}
<span class="pick"><select class="combo w58" aria-label="Find"><option>g_C_0_FLXTTIGHT.g_SG_PD</option></select></span>${ic('find')}${ic('find')}${ic('ffwd')}<span class="sp"></span>${ic('check', 'pressed')}${ic('check', f.trend ? 'off' : '')}${ic('check', f.trend ? 'off' : '')}<span class="sp"></span>${ic('zoom', f.trend ? 'off' : '')}${ic('zoom', f.trend ? 'off' : '')}<span class="pick"><select class="combo w62" aria-label="Language"><option>Select a Language...</option></select></span>${ic('globe')}</div>
<div class="state"><dl><dd>${f.run ? 'Rem Run' : 'Offline'}<i></i></dd><dd>No Forces<i></i></dd><dd>No Edits<i></i></dd></dl>
<ul class="leds">${(f.run ? ['Run Mode', 'Controller OK', 'Battery OK', 'I/O Not Present'] : ['RUN', 'OK', 'BAT', 'I/O']).map(x => `<li><i></i>${x}</li>`).join('')}</ul>
<svg class="key" viewBox="0 0 16 28"><path d="M0 0h16v3H0z"/><path d="M0 4h16v8H0z" fill="#b5b5b5"/><path d="${f.run ? 'M3 4h10v3H9v6H7V7H3z' : 'M7 4h1v7H7z'}" fill="${f.run ? '#222' : '#777'}"/><path d="M10 20h5v6h-5z" fill="#999"/><path d="M12 21v4h1v-4z" fill="#222"/></svg></div>
<div class="path"><b></b><span class="sp"></span>Path:<span class="pick"><select class="combo w94" aria-label="Path"><option>AB_VBP-1&#92;1*</option></select></span>${ic('net')}<span class="sp"></span>${ic('probe')}${ic('probe')}${ic('step')}${ic('probe')}${ic('probe')}</div>
<div class="instr"><div class="glyphs">${['‹', '', '|-|', '|a|', '|_|', '', '┤├', '┤/├', '( )', '(U)', '(L)', '›'].map(x => `<span>${x}</span>`).join('')}</div><div class="tabs">${['Favorites', 'Add-On', 'Alarms', 'Bit', 'Timer/Counter', 'Input/Output', 'Compare', 'Compute/Math', 'Move/Logical'].map((x, i) => `<span class="${i ? '' : 'on'}">${x}</span>`).join('')}</div></div></div>`;

const taskIcons = ['<circle cx="9" cy="6" r="6" fill="#2f7fb5"/><path d="M6 3h3v3H6z" fill="#e86a3a"/><path d="M9 3h3v3H9z" fill="#9c4"/><path d="M6 6h3v3H6z" fill="#7cf"/><path d="M9 6h3v3H9z" fill="#fd5"/>',
  '<circle cx="8" cy="7" r="3.5" fill="none" stroke="#4fb4ee" stroke-width="2"/><path d="M5 7h6" stroke="#4fb4ee" stroke-width="1.4"/><path d="M3 9c2-6 7-8 10-6" fill="none" stroke="#cda43a"/>',
  '<path d="M2 3h4l1 1h6v7H2z" fill="#f0dd92"/><path d="M4 9h7v3H4z" fill="#8fc4e0"/>',
  '<path d="M0 0h18v13H0z" fill="#75828a"/><path d="M3 10l4-8 3 3 3 5z" fill="#dfe9cf"/><path d="M8 5l4-3 3 3-3 2z" fill="#3c9a50"/><path d="M6 9h6v2H6z" fill="#c44"/>',
  '<path d="M0 0h18v13H0z" fill="#3d4549"/><path d="M3 4q5-3 10 0v7H3z" fill="#8a8748"/><path d="M6 6h5v4H6z" fill="#222"/>',
  '<path d="M0 0h19v13H0z" fill="#25323b"/><path d="M3 2h8l1 9H4z" fill="#bfe4ea"/><path d="M5 5h5M5 7h5" stroke="#469"/>'];
const mouse = f => `<svg class="mouse" style="left:${f.at[0] / 6.4}%;top:${f.at[1] / 3.6}%" viewBox="0 0 11 12"><circle cx="4" cy="4" r="3.4" fill="none" stroke="${f.trend ? '#101080' : '#2c2cb8'}"/><path d="M4 4v6l1.5-1.4 1 2 1-.4-1-2H8z" fill="#fff" stroke="#447" stroke-width=".4"/></svg>`;
const thumb = f => `<article class="frame ${f.run ? 'run' : ''} ${f.trend ? 'idle' : ''} ${f.lit ? 'lit' : ''}">
<div class="title"><h2>RSLogix 5000 - ServoMastery_SimpleMATC in ServoMastery_SimpleMATC.ACD [Emulator 20.01]* - [${f.trend ? 'Trend - MATC_1_Positioning' : 'MainProgram - MainRoutine'}]</h2><nav><span>–</span><span>❐</span><span class="close">✕</span></nav></div>
<div class="menu"><i></i>${['File', 'Edit', 'View', 'Search', 'Logic', 'Communications', 'Tools', 'Window', 'Help'].map(x => `<span>${x}</span>`).join('')}<span class="mdi">– ❐ ✕</span></div>
${bars(f)}<div class="work"><div class="start"><i></i>Start Page</div>${side(f)}${f.trend ? trendDoc(f) : ladderDoc(f)}</div>
<div class="status"><span>${f.status}</span>${f.trend ? '' : `<span>Rung ${f.low ? 5 : 1} of 7</span><span>APP VER</span>`}</div>
<div class="task">${taskIcons.map(x => `<svg viewBox="0 0 21 13">${x}</svg>`).join('')}<span class="tray">▴ ▪</span></div>
${f.dlg ? dialog(f) : ''}${mouse(f)}<time class="stamp">${f.time}</time></article>`;

const upper = (a, b, c, d, e) => [['home', a, 0], ['cam', b, 1], ['stop', c, 2], ['nop', d, 3], ['home', e, 4]];
const lower = (a, b, c, d, e) => [['nop', a, 3], ['home', b, 4], ['cam', c, 5], ['stop', d, 6], ['end', e, '(End)']];
const dialogStatus = 'View Configuration Dialog';
const first = { rungs: upper(68, 288, 597, 744, 793), tail: 1, status: dialogStatus, size: 'big', name: 'Cam1Profile*' };
const shots = [
  { ...first, time: '00:02:30', dlg: 1, sel: 6, vals: ['5.7', '1.76667', '0.333333', '0.0', '0.0'], at: [271, 129] },
  { ...first, time: '00:05:00', dlg: 2, hit: 6, vals: ['15.0667', '0.78333', '0.0', '0.0', '0.0'], at: [505, 139] },
  { time: '00:07:30', run: 1, rungs: upper(239, 459, 768, 915, 965), status: dialogStatus, dlg: 3, size: 'small', name: 'Cam1Profile', noApply: 1, vals: ['6.46667', '1.00833', '0.929913', '0.0', '0.0'], at: [274, 143] },
  { time: '00:10:00', lit: 1, pick: 1, stopOn: 1, rungs: upper(233, 453, 762, 909, 959), status: 'Enter BOOL operand', at: [95, 6] },
  { time: '00:12:30', lit: 1, run: 1, status: 'Ready', at: [557, 243], trend: { now: '8:09:08 AM', vals: ['73', '4'], m: [432, 907], times: ['8:08:24 AM', '8:08:33', '8:08:42', '8:08:51', '8:09:00', '8:09:08 AM'],
    w: '434,484 475,465 540,490 600,478 625,500 662,541 690,541 720,490 757,456 800,475 848,503 880,493 1088,493 1110,460 1135,415 1158,407 1190,422 1248,455 1290,437 1335,437 1392,417 1450,440 1498,433',
    y: '434,903 450,902 503,929 570,905 600,920 632,949 650,935 663,913 688,913 700,875 712,864 730,885 765,920 805,933 850,912 866,902 879,902 880,913 1085,913 1098,875 1110,864 1130,885 1160,922 1202,933 1240,915 1272,902 1318,917 1365,902 1420,929 1470,910 1498,906' } },
  { time: '00:15:00', lit: 1, run: 1, status: 'Ready', at: [194, 204], trend: { now: '8:11:38 AM', vals: ['58', '-1'], m: [487, 918], times: ['8:10:53 AM', '8:11:02', '8:11:11', '8:11:20', '8:11:29', '8:11:38 AM'],
    w: '1315,487 1380,487 1405,497 1426,506 1445,498 1470,484 1498,486', y: '1315,913 1380,913 1381,925 1421,925 1430,910 1446,897 1465,905 1485,917 1498,918' } },
  { time: '00:17:30', low: 1, railEnd: 908, rungs: lower(253, 302, 523, 733, 874), status: dialogStatus, dlg: 7, size: 'small', name: 'Cam2Profile', noApply: 1, vals: ['2.3', '1.22233', '-0.909979', '-0.267609', '2.07066'], at: [245, 131] },
  { time: '00:20:00', low: 1, railEnd: 908, rungs: lower(253, 302, 523, 733, 874), status: 'Project saved to Recovery file', dlg: 8, sel: 6, size: 'tall', name: 'Cam2Profile*', vals: ['3.16667', '2.25', '8.44271', '7.56466', '8.559612'], at: [148, 41] },
  { time: '00:22:30', low: 1, stopOn: 1, railEnd: 895, rungs: lower(240, 290, 510, 721, 861), status: dialogStatus, dlg: 9, sel: 1, size: 'small', name: 'Cam2Profile*', vals: ['3.55', '1.03333', '1.41966', '7.42756', '17.677064'], at: [282, 130] }
];
document.getElementById('sheet').innerHTML = shots.map(thumb).join('');
```
